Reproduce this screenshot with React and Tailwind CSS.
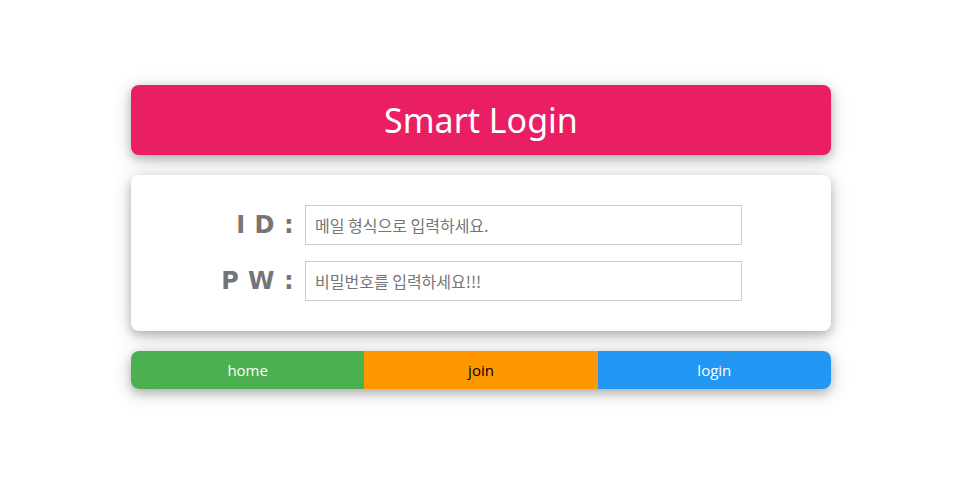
export default function App() {
  const card = "shadow-[0_4px_10px_0_rgba(0,0,0,0.2),0_4px_20px_0_rgba(0,0,0,0.19)]";
  const label = "w-[80px] whitespace-nowrap text-right text-[24px] font-bold text-[#757575] tracking-[0.5px] font-['DejaVu_Sans',sans-serif]";
  const field = "w-[437px] h-[40px] border border-[#ccc] px-[9px] text-[16px] text-[#555] placeholder:text-[#757575] font-['Noto_Sans_CJK_KR',sans-serif] outline-none";
  return (
    <main className="min-h-screen bg-white pt-[85px] font-['Open_Sans','Noto_Sans',sans-serif]">
      <div className="w-[700px] ml-[131px] flex flex-col gap-[20px]">
        <div className={`h-[70px] rounded-lg bg-[#e91e63] flex items-center justify-center ${card}`}>
          <h1 className="text-[34px] text-white font-['Noto_Sans',sans-serif] leading-none">Smart Login</h1>
        </div>

        <div className={`rounded-lg bg-white pt-[30px] pb-[30px] ${card}`}>
          <div className="flex flex-col gap-[16px] items-center pr-[6px]">
            <div className="flex items-center gap-[11px]">
              <label className={label}>I D :</label>
              <input className={field} placeholder="메일 형식으로 입력하세요." />
            </div>
            <div className="flex items-center gap-[11px]">
              <label className={label}>P W :</label>
              <input type="password" className={field} placeholder="비밀번호를 입력하세요!!!" />
            </div>
          </div>
        </div>

        <div className={`flex h-[38px] rounded-lg overflow-hidden ${card}`}>
          <button className="flex-1 bg-[#4caf50] text-white text-[15px]">home</button>
          <button className="flex-1 bg-[#ff9800] text-black text-[15px]">join</button>
          <button className="flex-1 bg-[#2196f3] text-white text-[15px]">login</button>
        </div>
      </div>
    </main>
  );
}
